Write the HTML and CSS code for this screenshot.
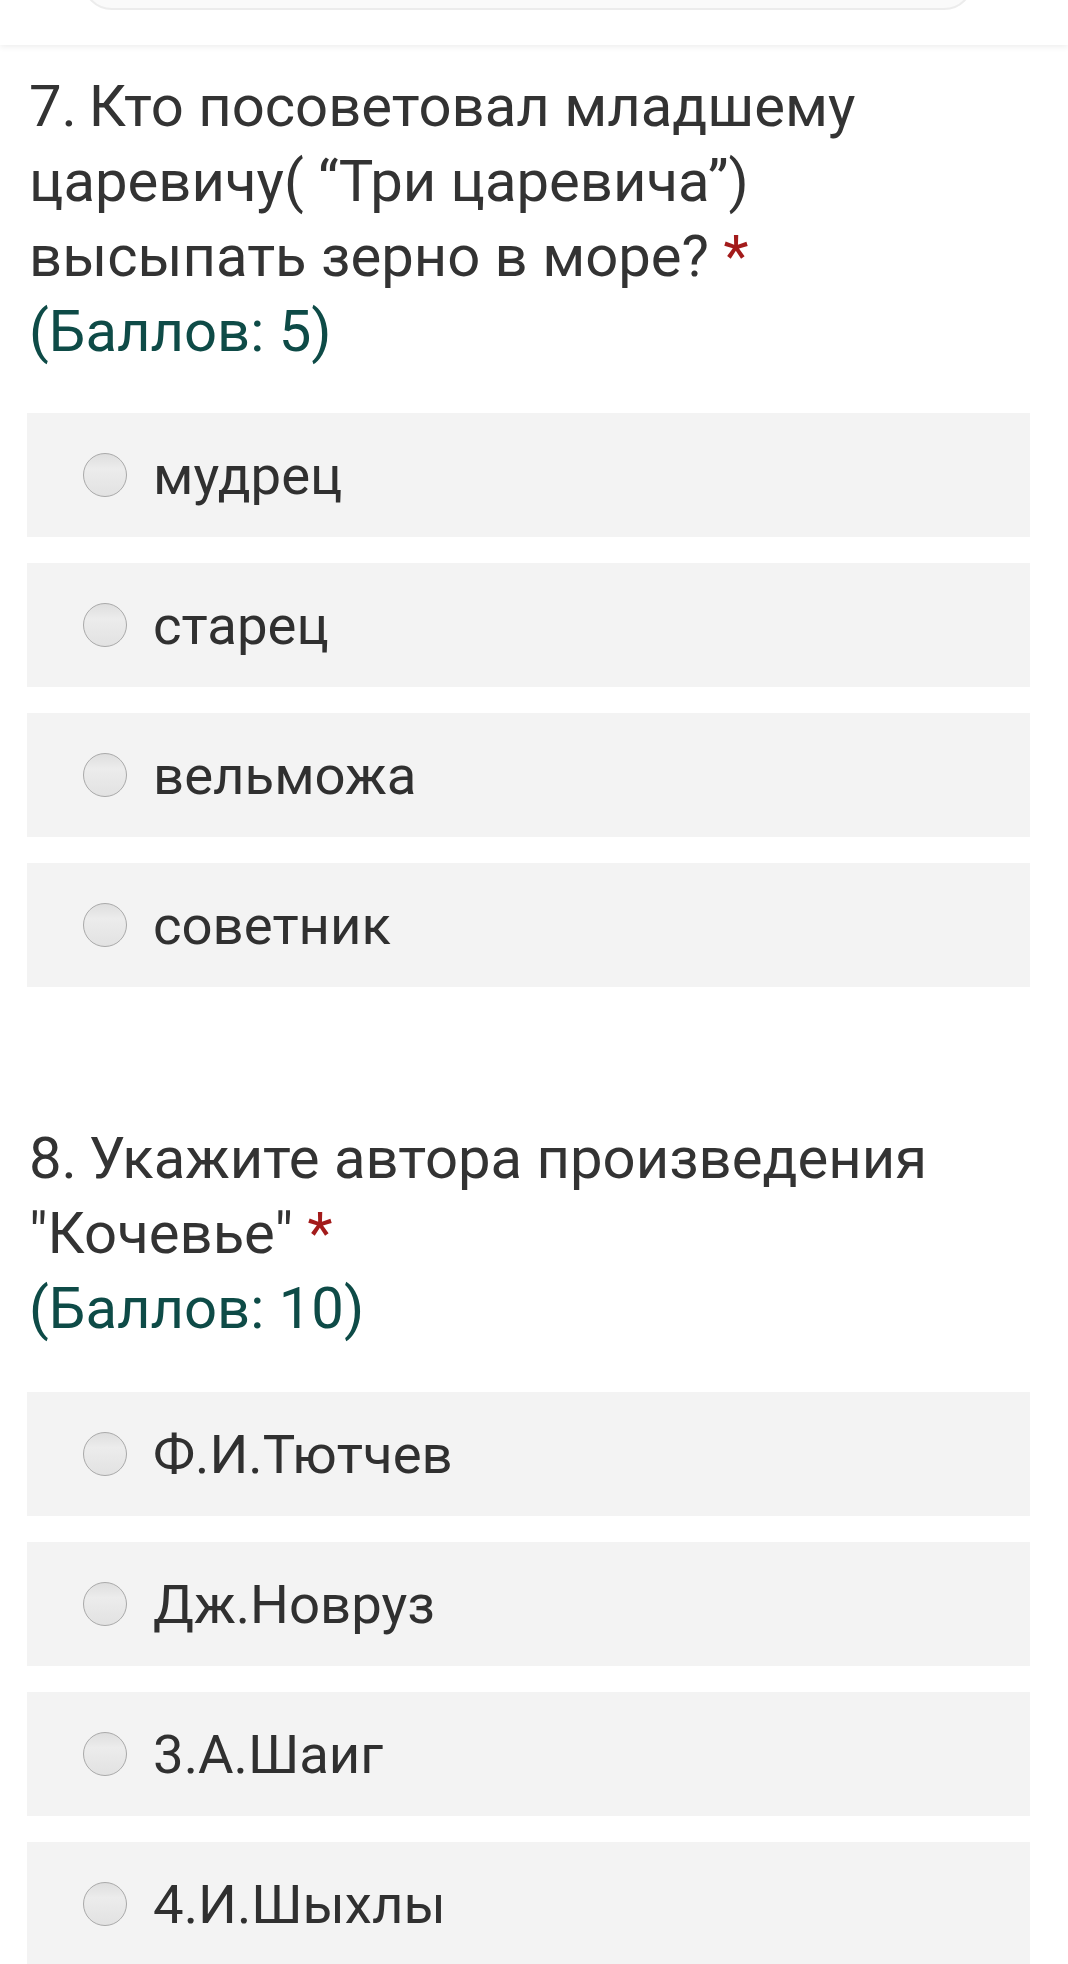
FILE: index.html
```html
<!DOCTYPE html>
<html lang="ru">
<head>
<meta charset="utf-8">
<link rel="stylesheet" href="styles.css">
</head>
<body>
<header class="topbar">
  <div class="topbox"></div>
</header>
<main class="form">
  <section class="question q7">
    <h2 class="qtitle">7.&#8201;Кто посоветовал младшему царевичу( “Три царевича”) высыпать зерно в море? <span class="req">*</span></h2>
    <div class="points">(Баллов: 5)</div>
    <ul class="options">
      <li class="option"><span class="radio"></span><span class="label">мудрец</span></li>
      <li class="option"><span class="radio"></span><span class="label">старец</span></li>
      <li class="option"><span class="radio"></span><span class="label">вельможа</span></li>
      <li class="option"><span class="radio"></span><span class="label">советник</span></li>
    </ul>
  </section>
  <section class="question q8">
    <h2 class="qtitle">8.&#8201;Укажите автора произведения "Кочевье" <span class="req">*</span></h2>
    <div class="points">(Баллов: 10)</div>
    <ul class="options">
      <li class="option"><span class="radio"></span><span class="label">Ф.И.Тютчев</span></li>
      <li class="option"><span class="radio"></span><span class="label">Дж.Новруз</span></li>
      <li class="option"><span class="radio"></span><span class="label">3.А.Шаиг</span></li>
      <li class="option"><span class="radio"></span><span class="label">4.И.Шыхлы</span></li>
    </ul>
  </section>
</main>
</body>
</html>
```
FILE: styles.css
```css
* { box-sizing: border-box; }
html, body { margin: 0; padding: 0; background: #fff; }
body {
  font-family: Roboto, "Noto Sans", "Liberation Sans", sans-serif;
  color: #333;
  overflow: hidden;
}
.topbar {
  height: 45px;
  overflow: hidden;
  background: #fff;
  padding: 0 94px 0 82px;
  position: relative;
  z-index: 1;
  box-shadow: 0 2px 6px rgba(0,0,0,0.07);
}
.topbox {
  height: 60px;
  margin-top: -50px;
  background: #fafafa;
  border: 2px solid #ececec;
  border-radius: 30px;
}
.form {
  padding: 24px 38px 0 27px;
}
.question + .question { margin-top: 134px; }
.qtitle {
  margin: 0;
  padding-left: 2px;
  max-width: 982px;
  font-weight: 400;
  font-size: 58px;
  line-height: 75px;
  color: #333;
}
.req { color: #a31b1b; }
.points {
  padding-left: 2px;
  font-size: 58px;
  line-height: 75px;
  color: #0e4b47;
}
.options {
  list-style: none;
  margin: 44px 0 0;
  padding: 0;
  display: flex;
  flex-direction: column;
  gap: 26px;
}
.q8 .options { margin-top: 46px; }
.option {
  height: 124px;
  background: #f3f3f3;
  display: flex;
  align-items: center;
  padding-left: 56px;
  gap: 26px;
}
.radio {
  width: 44px;
  height: 44px;
  flex: none;
  border-radius: 50%;
  border: 1.5px solid #a9a9a9;
  background: linear-gradient(to bottom, #dedede 0%, #ececec 35%, #e2e2e2 100%);
}
.label {
  font-size: 54.5px;
  line-height: 75px;
  color: #303030;
}
```
